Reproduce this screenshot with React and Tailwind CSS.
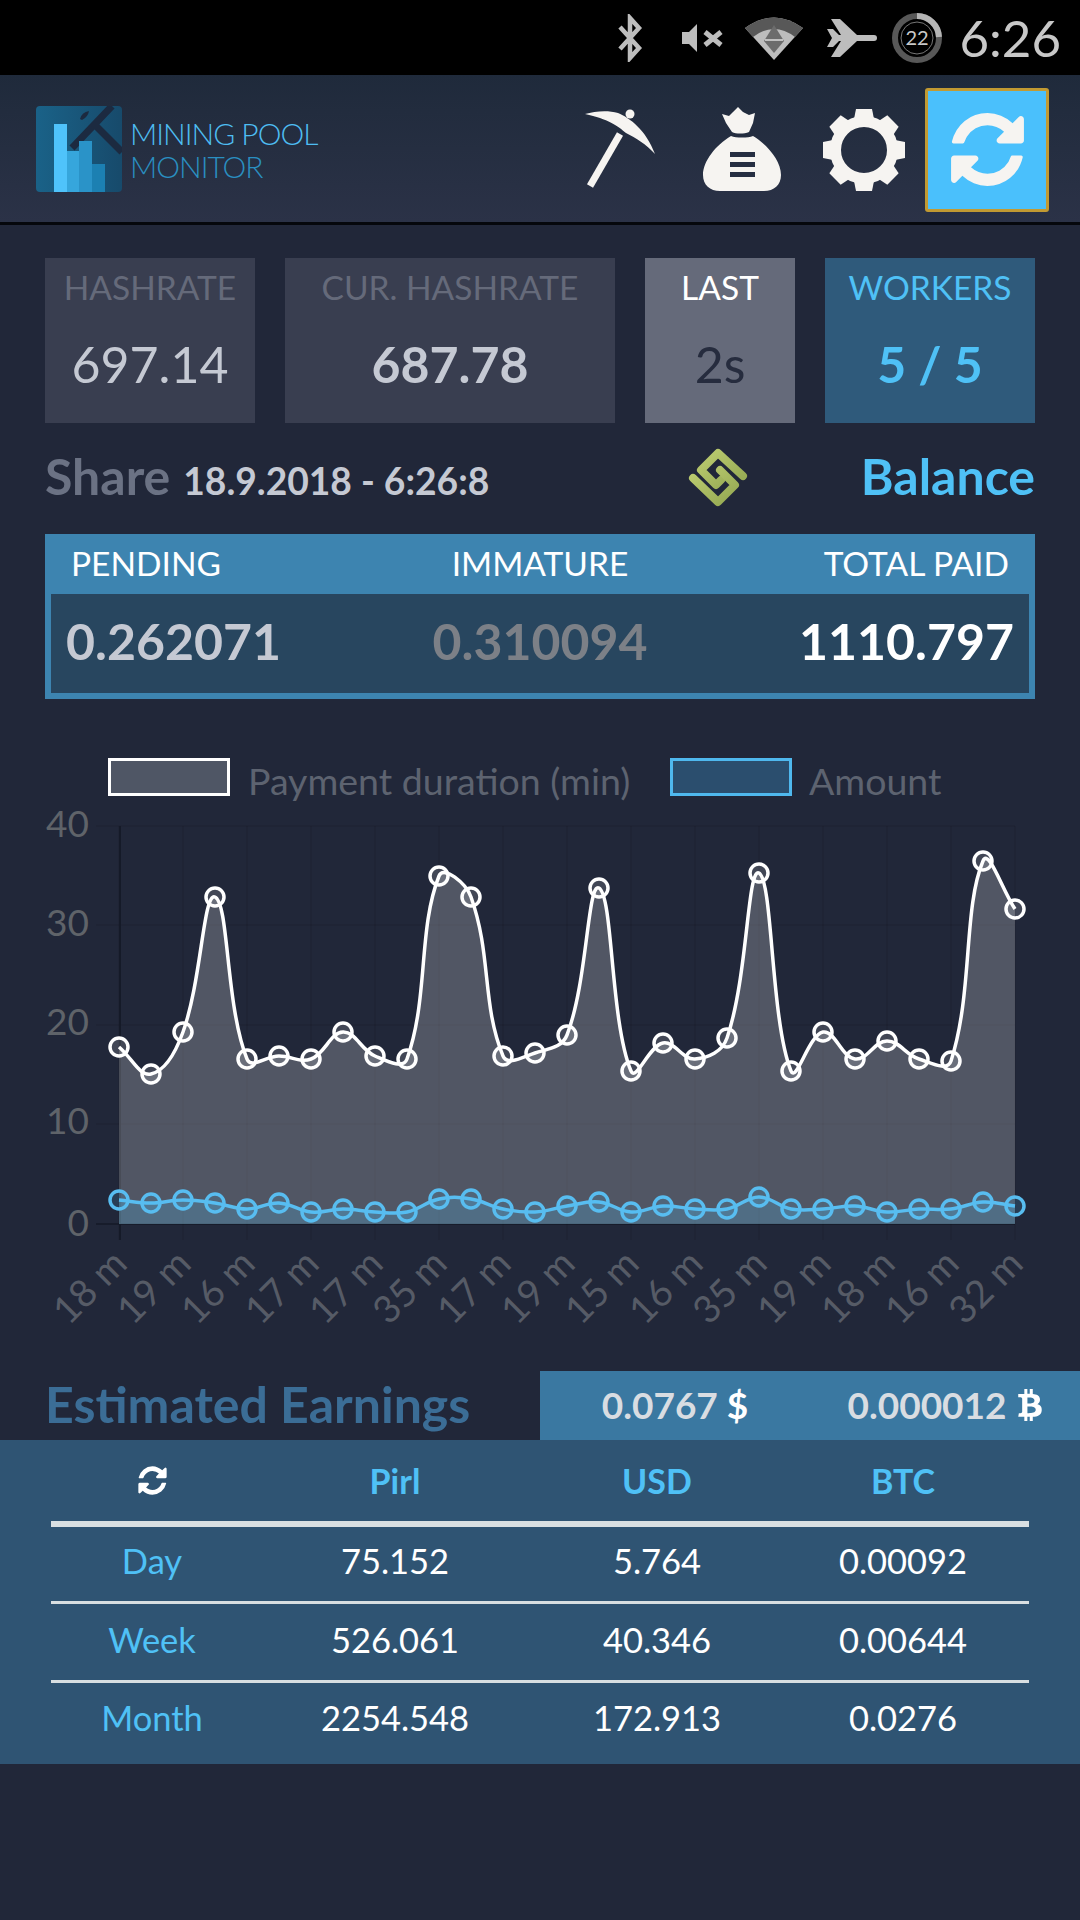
import { FaBtc } from "react-icons/fa";

const payment = [1047, 1074, 1032, 897, 1059, 1056, 1059, 1032, 1056, 1059, 876, 897, 1056, 1053, 1035, 888, 1071, 1043, 1059, 1038, 873, 1071, 1032, 1059, 1041, 1059, 1061, 861, 909];
const amount = [1200, 1203, 1200, 1203, 1209, 1203, 1212, 1209, 1212, 1212, 1199, 1199, 1209, 1212, 1206, 1202, 1212, 1206, 1209, 1209, 1197, 1209, 1209, 1206, 1212, 1209, 1209, 1202, 1206];
const xLabels = ["18 m", "19 m", "16 m", "17 m", "17 m", "35 m", "17 m", "19 m", "15 m", "16 m", "35 m", "19 m", "18 m", "16 m", "32 m"];
const yTicks = [
  { label: "40", line: 826, text: 824 },
  { label: "30", line: 925, text: 923 },
  { label: "20", line: 1025, text: 1022 },
  { label: "10", line: 1124, text: 1121 },
  { label: "0", line: 1224, text: 1223 },
];

const BASE_Y = 1224;
const pointX = (i) => 119 + 32 * i;

// same bezier smoothing as chart.js, tension 0.4
const smoothPath = (ys) => {
  const pts = ys.map((y, i) => ({ x: pointX(i), y }));
  const controls = pts.map((cur, i) => {
    const prev = pts[i - 1] || cur;
    const next = pts[i + 1] || cur;
    const d01 = Math.hypot(cur.x - prev.x, cur.y - prev.y);
    const d12 = Math.hypot(next.x - cur.x, next.y - cur.y);
    const sum = d01 + d12 || 1;
    const fa = (0.4 * d01) / sum;
    const fb = (0.4 * d12) / sum;
    return {
      before: { x: cur.x - fa * (next.x - prev.x), y: cur.y - fa * (next.y - prev.y) },
      after: { x: cur.x + fb * (next.x - prev.x), y: cur.y + fb * (next.y - prev.y) },
    };
  });
  let d = `M${pts[0].x},${pts[0].y}`;
  for (let i = 1; i < pts.length; i++) {
    const a = controls[i - 1].after;
    const b = controls[i].before;
    d += ` C${a.x},${a.y} ${b.x},${b.y} ${pts[i].x},${pts[i].y}`;
  }
  return d;
};

const closeArea = (line) => `${line} L${pointX(28)},${BASE_Y} L${pointX(0)},${BASE_Y} Z`;

const RefreshIcon = ({ size, color }) => (
  <svg width={size} height={size} viewBox="0 0 1792 1792" fill={color}>
    <path d="M1639 1056q0 5-1 7-64 268-268 434.500t-478 166.500q-146 0-282.500-55t-243.500-157l-129 129q-19 19-45 19t-45-19-19-45v-448q0-26 19-45t45-19h448q26 0 45 19t19 45-19 45l-137 137q71 66 161 102t187 36q134 0 250-65t186-179q11-17 53-117 8-23 30-23h192q13 0 22.500 9.500t9.500 22.500zm25-800v448q0 26-19 45t-45 19h-448q-26 0-45-19t-19-45 19-45l138-138q-148-137-349-137-134 0-250 65t-186 179q-11 17-53 117-8 23-30 23h-199q-13 0-22.500-9.500t-9.500-22.500v-7q65-268 270-434.500t480-166.500q146 0 284 55.500t245 156.500l130-129q19-19 45-19t45 19 19 45z" />
  </svg>
);

const Chart = () => {
  const whiteLine = smoothPath(payment);
  const blueLine = smoothPath(amount);
  return (
    <svg viewBox="0 740 1080 631" className="block w-[1080px] h-[631px]">
      <rect x="109.500" y="759.500" width="119" height="35" fill="#4f5665" stroke="#ffffff" strokeWidth="3" />
      <text x="248" y="795" fontSize="37.500" fill="#5d6370">Payment duration (min)</text>
      <rect x="671.500" y="759.500" width="119" height="35" fill="#2b4e6e" stroke="#4fb8ee" strokeWidth="3" />
      <text x="809" y="795" fontSize="37.500" fill="#5d6370">Amount</text>

      {yTicks.map((t) => (
        <g key={t.label}>
          <line x1="96" x2="1015" y1={t.line} y2={t.line} stroke={t.label === "0" ? "#151a28" : "#000000"} strokeOpacity={t.label === "0" ? 0.8 : 0.06} strokeWidth="2" />
          <text x="89" y={t.text + 13} textAnchor="end" fontSize="37" fill="#5f6369">{t.label}</text>
        </g>
      ))}
      {xLabels.map((label, i) => (
        <g key={i}>
          <line x1={pointX(i * 2)} x2={pointX(i * 2)} y1="826" y2="1240" stroke="#000000" strokeOpacity="0.06" strokeWidth="2" />
          <text transform={`translate(${pointX(i * 2) + 10},1266) rotate(-45)`} textAnchor="end" fontSize="38" fill="#565b66">{label}</text>
        </g>
      ))}
      <line x1="120" x2="120" y1="826" y2="1240" stroke="#151a28" strokeWidth="2" />

      <path d={closeArea(whiteLine)} fill="#ffffff" fillOpacity="0.22" />
      <path d={closeArea(blueLine)} fill="#4fc1f6" fillOpacity="0.22" />

      <path d={whiteLine} fill="none" stroke="#ffffff" strokeWidth="3.500" />
      {payment.map((y, i) => (
        <circle key={i} cx={pointX(i)} cy={y} r="9" fill="#ffffff" fillOpacity="0.15" stroke="#ffffff" strokeWidth="3.500" />
      ))}
      <path d={blueLine} fill="none" stroke="#58bdf0" strokeWidth="3.500" />
      {amount.map((y, i) => (
        <circle key={i} cx={pointX(i)} cy={y} r="9" fill="#4fc1f6" fillOpacity="0.15" stroke="#58bdf0" strokeWidth="3.500" />
      ))}
    </svg>
  );
};

const StatusBar = () => (
  <div className="h-[75px] bg-black flex items-center justify-end pr-[19px]">
    {/* bluetooth */}
    <svg width="26" height="48" viewBox="0 0 26 48" className="mr-[39px]">
      <path d="M3,13 L22,34 L13,44 L13,4 L22,14 L3,35" fill="none" stroke="#bdbdbd" strokeWidth="4.500" />
    </svg>
    {/* muted speaker */}
    <svg width="42" height="28" viewBox="0 0 42 28" className="mr-[21px]">
      <path d="M0,8 L7,8 L15,0 L15,28 L7,20 L0,20 Z" fill="#bdbdbd" />
      <path d="M23,8 L39,21 M39,8 L23,21" stroke="#bdbdbd" strokeWidth="5" />
    </svg>
    {/* wifi */}
    <svg width="58" height="45" viewBox="0 0 58 45" className="mr-[24px]">
      <path d="M0,13 Q29,-8 58,13 L29,45 Z" fill="#bdbdbd" />
      <path d="M0,13 Q29,-8 58,13 L50,22 Q29,6 8,22 Z" fill="#585858" />
      <path d="M29,10 L39,26 L29,38 L19,26 Z" fill="#6c6c6c" />
      <path d="M20,25 L38,25" stroke="#dddddd" strokeWidth="1.500" />
    </svg>
    {/* airplane mode */}
    <svg width="50" height="38" viewBox="0 0 50 38" className="mr-[15px]">
      <path d="M30,16 L13,0 L4,0 L14,16 Z M30,22 L13,38 L4,38 L14,22 Z M0,10 L6,10 L12,16 L12,22 L6,28 L0,28 L5,19 Z" fill="#bdbdbd" />
      <path d="M10,19 L47,19" stroke="#bdbdbd" strokeWidth="6" strokeLinecap="round" />
    </svg>
    {/* battery ring */}
    <svg width="50" height="50" viewBox="0 0 50 50" className="mr-[18px]">
      <circle cx="25" cy="25" r="22" fill="none" stroke="#585858" strokeWidth="6" />
      <path d="M25,3 A22,22 0 0 1 47,24" fill="none" stroke="#b5b5b5" strokeWidth="6" />
      <circle cx="25" cy="25" r="16" fill="none" stroke="#777777" strokeWidth="1" />
      <text x="25" y="32" textAnchor="middle" fontSize="20" fill="#c8c8c8">22</text>
    </svg>
    <span className="text-[51px] leading-none text-[#c8c8c8]">6:26</span>
  </div>
);

const Logo = () => (
  <div className="flex items-center ml-[36px]">
    <svg width="86" height="86" viewBox="0 0 86 86">
      <defs>
        <linearGradient id="logoBg" x1="0" y1="0" x2="1" y2="0">
          <stop offset="0" stopColor="#1a6288" />
          <stop offset="1" stopColor="#174a6b" />
        </linearGradient>
      </defs>
      <rect width="86" height="86" rx="4" fill="url(#logoBg)" />
      <path d="M36,42 L76,0" stroke="#1c2a40" strokeWidth="7" />
      <path d="M58,18 L86,46" stroke="#1c2a40" strokeWidth="7" />
      <path d="M44,13 Q46,6 53,5 Q52,11 46,14 Z" fill="#1c2a40" />
      <rect x="18" y="18" width="13" height="68" fill="#4fc3fb" />
      <rect x="31" y="45" width="12" height="41" fill="#36a6dc" />
      <rect x="43" y="35" width="13" height="51" fill="#2a93c8" />
      <rect x="56" y="58" width="13" height="28" fill="#1c80b2" />
    </svg>
    <div className="ml-[8px] mt-[2px] font-light text-[30px] leading-[33px] tracking-[-1px]">
      <div className="text-[#4ebdf2]">MINING POOL</div>
      <div className="text-[#2a8fc1]">MONITOR</div>
    </div>
  </div>
);

const Pickaxe = () => (
  <svg width="80" height="85" viewBox="0 0 80 85">
    <path d="M5,8 C15,5 28,4 38,7 C50,12 66,24 75,48 C66,38 56,32 46,27 C38,20 28,13 5,8 Z" fill="#f6f4f1" />
    <circle cx="50" cy="8" r="4.500" fill="#f6f4f1" />
    <path d="M40,28 L10,80" stroke="#f6f4f1" strokeWidth="7" />
  </svg>
);

const MoneyBag = () => (
  <svg width="84" height="88" viewBox="0 0 84 88">
    <path d="M31,31 C36,33 48,33 53,31 C68,40 81,56 81,70 C81,80 74,86 64,86 L20,86 C10,86 3,80 3,70 C3,56 16,40 31,31 Z" fill="#f6f4f1" />
    <path d="M22,9 L29,11 L33,7 L38,2 L43,7 L49,10 L55,8 L53,18 L49,27 C44,29 36,29 32,27 L26,18 Z" fill="#f6f4f1" />
    <rect x="30" y="47" width="25" height="5" fill="#262e42" />
    <rect x="30" y="57" width="25" height="5" fill="#262e42" />
    <rect x="30" y="67" width="25" height="5" fill="#262e42" />
  </svg>
);

const Gear = () => (
  <svg width="84" height="84" viewBox="0 0 84 84">
    {[0, 45, 90, 135, 180, 225, 270, 315].map((deg) => (
      <path key={deg} d="M34,1 L50,1 L53,16 L31,16 Z" fill="#f6f4f1" transform={`rotate(${deg} 42 42)`} />
    ))}
    <circle cx="42" cy="42" r="28.500" fill="none" stroke="#f6f4f1" strokeWidth="11" />
  </svg>
);

const Header = () => (
  <div className="h-[150px] flex items-center justify-between border-b-[3px] border-[#05070c] bg-gradient-to-b from-[#1f2a3b] to-[#2b3247]">
    <Logo />
    <div className="flex items-center pr-[31px]">
      <div className="mr-[40px]"><Pickaxe /></div>
      <div className="mr-[38px]"><MoneyBag /></div>
      <div className="mr-[19px] mt-[3px]"><Gear /></div>
      <button className="w-[124px] h-[124px] mt-[2px] flex items-center justify-center bg-[#4ac0fc] border-[3px] border-[#c29a32] rounded-[3px]">
        <RefreshIcon size={85} color="#f6f4f1" />
      </button>
    </div>
  </div>
);

const StatTile = ({ label, value, className, labelClass, valueClass }) => (
  <div className={`h-[165px] flex flex-col items-center ${className}`}>
    <div className={`mt-[9px] text-[33.500px] leading-[40px] ${labelClass}`}>{label}</div>
    <div className={`mt-[27px] text-[50px] leading-[60px] ${valueClass}`}>{value}</div>
  </div>
);

const BalanceTable = () => (
  <div>
    <div className="h-[60px] pb-[2px] grid grid-cols-3 items-center px-[26px] bg-[#3d84b0] text-[33.500px] text-white">
      <div>PENDING</div>
      <div className="text-center">IMMATURE</div>
      <div className="text-right">TOTAL PAID</div>
    </div>
    <div className="h-[105px] grid grid-cols-3 items-center pl-[15px] pr-[15px] pb-[4px] bg-[#28465f] border-x-[6px] border-b-[6px] border-[#3d84b0] text-[50px] font-bold">
      <div className="text-[#c5c9d3]">0.262071</div>
      <div className="text-center text-[#7c8087]">0.310094</div>
      <div className="text-right text-white">1110.797</div>
    </div>
  </div>
);

const ShareLogo = () => (
  <svg width="60" height="60" viewBox="0 0 60 60">
    <defs>
      <linearGradient id="shareGreen" x1="0" y1="0" x2="1" y2="1">
        <stop offset="0" stopColor="#bccc70" />
        <stop offset="1" stopColor="#94a852" />
      </linearGradient>
    </defs>
    <g fill="none" stroke="url(#shareGreen)" strokeWidth="8" strokeLinecap="round" strokeLinejoin="round">
      <path d="M55,29 L30,6 L13,23 L28,38 L33,33" />
      <path d="M5,31 L30,55 L47,38 L32,23" />
    </g>
  </svg>
);

const earningsRows = [
  { name: "Day", pirl: "75.152", usd: "5.764", btc: "0.00092", height: "h-[74px] pb-[7px]" },
  { name: "Week", pirl: "526.061", usd: "40.346", btc: "0.00644", height: "h-[76px] pb-[5px]" },
  { name: "Month", pirl: "2254.548", usd: "172.913", btc: "0.0276", height: "h-[74px] pb-[5px]" },
];

const EarningsTable = () => (
  <div className="h-[324px] px-[51px] bg-[#2f5473] text-[34.500px] text-center">
    <div className="h-[81px] grid grid-cols-[202px_284px_240px_252px] items-center font-bold text-[34px] text-[#4fc1f6]">
      <div className="flex justify-center"><RefreshIcon size={33} color="#ffffff" /></div>
      <div>Pirl</div>
      <div>USD</div>
      <div>BTC</div>
    </div>
    <div className="h-[6px] bg-[#d8dfe2]" />
    {earningsRows.map((row, i) => (
      <div key={row.name}>
        <div className={`${row.height} grid grid-cols-[202px_284px_240px_252px] items-center text-white`}>
          <div className="text-[#4fc1f6]">{row.name}</div>
          <div>{row.pirl}</div>
          <div>{row.usd}</div>
          <div>{row.btc}</div>
        </div>
        {i < 2 && <div className="h-[3px] bg-[#d8dfe2]" />}
      </div>
    ))}
  </div>
);

export default function App() {
  return (
    <div className="w-[1080px] h-[1920px] overflow-hidden bg-[#212739] font-['Lato','Liberation_Sans',sans-serif]">
      <StatusBar />
      <Header />

      <div className="px-[45px] pt-[33px]">
        <div className="flex gap-[30px]">
          <StatTile label="HASHRATE" value="697.14" className="w-[210px] bg-[#393e50]" labelClass="text-[#656a7a]" valueClass="text-[#c5c9d3]" />
          <StatTile label="CUR. HASHRATE" value="687.78" className="w-[330px] bg-[#393e50]" labelClass="text-[#656a7a]" valueClass="font-bold text-[#c5c9d3]" />
          <StatTile label="LAST" value="2s" className="w-[150px] bg-[#656a7a]" labelClass="text-white" valueClass="text-[#262c3e]" />
          <StatTile label="WORKERS" value="5 / 5" className="w-[210px] bg-[#2f5a7b]" labelClass="text-[#4fc1f6]" valueClass="font-bold text-[#4fc1f6]" />
        </div>

        <div className="h-[111px] pb-[4px] flex items-center">
          <div className="flex-1 flex items-baseline font-bold">
            <span className="text-[50px] text-[#6b7284]">Share</span>
            <span className="ml-[13px] text-[37.200px] text-[#c5c9d3]">18.9.2018 - 6:26:8</span>
          </div>
          <ShareLogo />
          <div className="w-[287px] text-right text-[50px] font-bold text-[#4fc1f6]">Balance</div>
        </div>

        <BalanceTable />
      </div>

      <div className="mt-[41px]">
        <Chart />
      </div>

      <div className="h-[69px] flex">
        <div className="w-[540px] pl-[45px] pb-[3px] flex items-center text-[50px] font-bold text-[#3b6d96] whitespace-nowrap">Estimated Earnings</div>
        <div className="w-[540px] pb-[2px] grid grid-cols-2 items-center bg-[#3a78a1] text-[37px] font-bold text-[#d9dde2] text-center">
          <div>0.0767 <span className="text-white">$</span></div>
          <div className="flex items-center justify-center gap-[7px] pl-[3px]">0.000012 <FaBtc size={32} color="#ffffff" /></div>
        </div>
      </div>
      <EarningsTable />
    </div>
  );
}
